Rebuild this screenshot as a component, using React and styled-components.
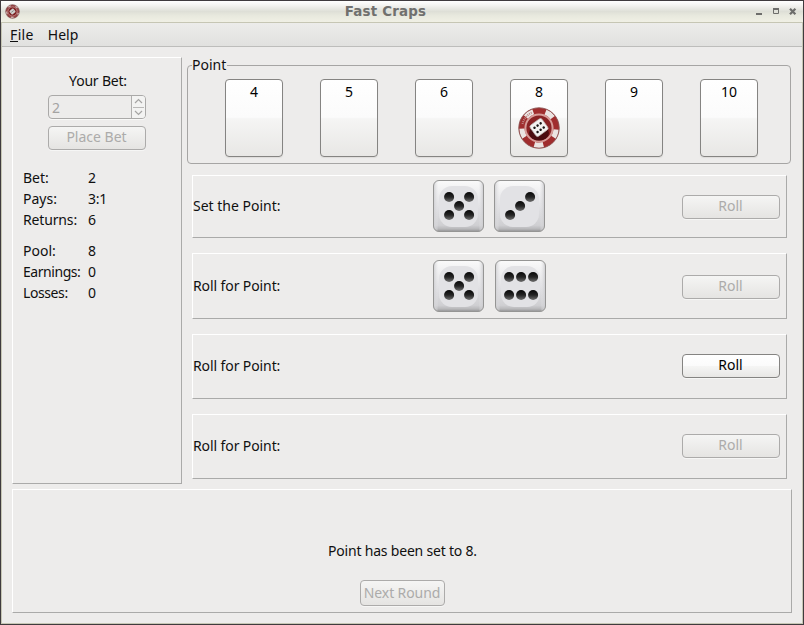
import React from "react";
import styled, { createGlobalStyle, css } from "styled-components";

const GlobalStyle = createGlobalStyle`
  * { box-sizing: border-box; }
  body { margin: 0; background: #edeceb; }
`;

const Window = styled.div`
  width: 804px;
  height: 625px;
  display: flex;
  flex-direction: column;
  border: 1px solid #3f3b3e;
  background: #edeceb;
  color: #101010;
  font: 14px/21px "Noto Sans", sans-serif;
  overflow: hidden;
`;

const Frame = styled.div`
  flex: 1;
  border: 1px solid #c6c6b4;
  display: flex;
  flex-direction: column;
`;

const TitleBar = styled.header`
  height: 21px;
  display: grid;
  grid-template-columns: 60px 1fr 60px;
  align-items: center;
  padding: 0 6px 0 4px;
  background: linear-gradient(#ffffff 0, #f4f4f1 20%, #dedfd7 50%, #e8e9de 70%, #f0f0e5 100%);
`;

const Title = styled.h1`
  margin: 0 31px 0 0;
  text-align: center;
  color: #70706e;
  font: bold 13.4px/18px "DejaVu Sans", sans-serif;
  letter-spacing: 0.2px;
`;

const WindowControls = styled.div`
  display: flex;
  justify-content: flex-end;
  gap: 9px;
  svg { display: block; }
`;

const MenuBar = styled.nav`
  height: 24px;
  display: flex;
  gap: 14px;
  padding: 1px 8px 0;
  border-bottom: 1px solid #bdbdbb;
  background: linear-gradient(#ececea, #e1e1df);
`;

const Text = styled.span`
  white-space: pre;
  letter-spacing: ${(p) => p.$spacing || 0}px;
`;

const Mnemonic = styled.span`
  display: inline-block;
  height: 18px;
  line-height: 21px;
  border-bottom: 1px solid #101010;
`;

const Content = styled.main`
  flex: 1;
  padding: 10px 10px 0;
  display: flex;
  flex-direction: column;
  gap: 5px;
`;

const Upper = styled.div`
  display: flex;
  gap: 5px;
  height: 427px;
`;

const raised = css`
  border: 1px solid;
  border-color: #ffffff #aaaaa9 #aaaaa9 #ffffff;
`;

const BetPanel = styled.section`
  ${raised}
  width: 170px;
  padding: 12px 0 0;
  display: flex;
  flex-direction: column;
  align-items: center;
`;

const PanelTitle = styled.div`
  padding-left: 2px;
  letter-spacing: -0.2px;
`;

const SpinBox = styled.div`
  width: 98px;
  height: 24px;
  margin: 4px 0 7px;
  display: flex;
  border: 1px solid #aaa9a8;
  border-radius: 4px;
  color: #a4a3a2;
  box-shadow: 0 1px 0 #f8f8f7;
`;

const SpinValue = styled.div`
  flex: 1;
  padding: 1px 0 0 3px;
`;

const SpinArrows = styled.div`
  width: 14px;
  border-left: 1px solid #b0afae;
  background: #f3f3f2;
  border-radius: 0 3px 3px 0;
  svg { display: block; }
`;

const Button = styled.button`
  width: ${(p) => p.$width || 98}px;
  height: ${(p) => p.$height || 24}px;
  flex: none;
  padding: 0 1px ${(p) => (p.$height ? 0 : 2)}px 0;
  border: 1px solid #858482;
  border-radius: 4px;
  background: linear-gradient(#ffffff 0, #fbfbfb 48%, #f5f5f4 52%, #e8e7e5 100%);
  box-shadow: 0 1px 0 #f6f6f5;
  color: #000;
  font: inherit;
  line-height: 20px;
  letter-spacing: ${(p) => p.$spacing || 0}px;
  &:disabled {
    color: #acabaa;
    border-color: #acabaa;
    background: linear-gradient(#f5f5f4, #e5e4e2);
  }
`;

const Stats = styled.dl`
  align-self: stretch;
  margin: ${(p) => p.$top}px 0 0 10px;
  display: grid;
  grid-template-columns: 65px 1fr;
  grid-auto-rows: 21px;
`;

const Term = styled.dt`
  white-space: nowrap;
  letter-spacing: ${(p) => p.$spacing || 0}px;
`;

const Value = styled.dd`
  margin: 0;
  letter-spacing: -0.2px;
`;

const Table = styled.div`
  width: 605px;
  display: flex;
  flex-direction: column;
`;

const PointGroup = styled.fieldset`
  margin: 0 1px 0 0;
  width: 604px;
  height: 107px;
  padding: 0 32px 0 37px;
  border: 1px solid #a6a5a4;
  border-radius: 4px;
  display: flex;
  justify-content: space-between;
`;

const Legend = styled.legend`
  margin-left: -33px;
  padding: 0 1px 0 0;
  height: 17px;
  line-height: 15px;
`;

const Card = styled.div`
  width: 58px;
  height: 78px;
  margin-top: 5px;
  padding-top: 1px;
  display: flex;
  flex-direction: column;
  align-items: center;
  border: 1px solid #858482;
  border-radius: 4px;
  background: linear-gradient(#ffffff 0, #fbfbfb 49%, #f5f5f4 51%, #e8e7e5 100%);
  box-shadow: 0 1px 1px #dddcda;
  color: #000;
  svg { display: block; flex: none; margin-top: 5px; }
`;

const Rows = styled.div`
  margin: 11px 0 0 5px;
  width: 595px;
  display: grid;
  grid-template-rows: 63px 66px 65px 65px;
  gap: 15px;
`;

const RollRow = styled.section`
  ${raised}
  display: grid;
  grid-template-columns: 240px 1fr 98px;
  padding: ${(p) => p.$top}px 6px 0 0;
  align-items: start;
`;

const RollLabel = styled.div`
  padding-top: 15px;
  letter-spacing: ${(p) => p.$spacing || 0}px;
`;

const DiceTray = styled.div`
  display: flex;
  gap: ${(p) => p.$gap}px;
  svg { display: block; }
`;

const RollSlot = styled.div`
  padding-top: ${(p) => p.$top}px;
  display: flex;
`;

const MessagePanel = styled.section`
  ${raised}
  width: 780px;
  height: 124px;
  padding: 50px 0 0 1px;
  display: flex;
  flex-direction: column;
  align-items: center;
  gap: 19px;
`;

const PIPS = {
  3: [[36.5, 17], [26.5, 26], [16.5, 35]],
  5: [[16.5, 17], [36.5, 17], [26.5, 26], [16.5, 35], [36.5, 35]],
  6: [[14.5, 17], [26.5, 17], [38.5, 17], [14.5, 35], [26.5, 35], [38.5, 35]],
};

function Die({ value }) {
  return (
    <svg width="51" height="52" viewBox="0 0 51 52">
      <defs>
        <linearGradient id="dieBody" x1="0" y1="0" x2="0" y2="1">
          <stop offset="0" stopColor="#fafafa" />
          <stop offset="0.5" stopColor="#e2e2e5" />
          <stop offset="0.88" stopColor="#cfcfd2" />
          <stop offset="0.95" stopColor="#b8b8ba" />
          <stop offset="1" stopColor="#929294" />
        </linearGradient>
        <linearGradient id="dieSide" x1="0" y1="0" x2="1" y2="0">
          <stop offset="0" stopColor="#cfcfd2" />
          <stop offset="0.1" stopColor="#e6e6e8" stopOpacity="0" />
          <stop offset="0.9" stopColor="#e6e6e8" stopOpacity="0" />
          <stop offset="1" stopColor="#cacacd" />
        </linearGradient>
        <linearGradient id="pip" x1="0" y1="0" x2="0" y2="1">
          <stop offset="0" stopColor="#080808" />
          <stop offset="0.5" stopColor="#242424" />
          <stop offset="1" stopColor="#707070" />
        </linearGradient>
      </defs>
      <rect x="0.5" y="0.5" width="50" height="51" rx="5.5" fill="url(#dieBody)" />
      <rect x="0.5" y="0.5" width="50" height="51" rx="5.5" fill="url(#dieSide)" stroke="#959594" />
      <rect x="6" y="6" width="39" height="41" rx="13" fill="#e2e2e5" />
      {PIPS[value].map(([x, y]) => (
        <circle key={`${x}-${y}`} cx={x - 0.4} cy={y} r="5" fill="url(#pip)" />
      ))}
    </svg>
  );
}

function Chip({ size }) {
  return (
    <svg width={size} height={size} viewBox="0 0 42 42">
      <circle cx="21" cy="21" r="20.3" fill="#a02d2e" />
      <circle cx="21" cy="21" r="17.2" fill="none" stroke="#ebe4e2" strokeWidth="5.4"
        strokeDasharray="9 12.6" strokeDashoffset="4.5" transform="rotate(18 21 21)" />
      <circle cx="21" cy="21" r="20.2" fill="none" stroke="#8a5352" strokeWidth="0.9" />
      <circle cx="21" cy="21" r="13.6" fill="#8a2224" stroke="#d79c99" strokeWidth="2" />
      <ellipse cx="21" cy="26" rx="10" ry="7.5" fill="#4a0c0f" />
      <path d="M4.5 17A17 17 0 0 1 14 5.5" fill="none" stroke="#c08a88" strokeWidth="2" strokeDasharray="1 1" />
      <g transform="translate(21 20.5) rotate(-36)">
        <rect x="-7.3" y="-6.8" width="14.6" height="13.6" rx="2.2" fill="#f3f1ef" stroke="#bdb6b3" strokeWidth="0.7" />
        {[-3.8, 0, 3.8].map((x) =>
          [-2.4, 2.8].map((y) => <circle key={`${x},${y}`} cx={x} cy={y} r="1.25" fill="#191414" />)
        )}
      </g>
    </svg>
  );
}

function ChipIcon() {
  return (
    <svg width="15" height="15" viewBox="0 0 15 15">
      <circle cx="7.5" cy="7.5" r="6.8" fill="#953f40" stroke="#7d5252" strokeWidth="0.7" />
      <circle cx="7.5" cy="7.5" r="5.9" fill="none" stroke="#c9b0ae" strokeWidth="1.3"
        strokeDasharray="2.6 4.8" strokeDashoffset="1.3" transform="rotate(18 7.5 7.5)" />
      <circle cx="7.5" cy="7.5" r="4.6" fill="#7d2224" stroke="#c79492" strokeWidth="0.8" />
      <rect x="5.1" y="5.2" width="4.8" height="4.6" rx="0.8" fill="#d0cfcd" transform="rotate(-40 7.5 7.5)" />
      <path d="M6.3 8.4l2.4-1.9" stroke="#777" strokeWidth="0.8" />
    </svg>
  );
}

const ROLLS = [
  { label: "Set the Point:", dice: [5, 3], gap: 10, top: 4, slot: 15, spacing: 0 },
  { label: "Roll for Point:", dice: [5, 6], gap: 11, top: 6, slot: 15, spacing: -0.1 },
  { label: "Roll for Point:", dice: [], gap: 0, top: 5, slot: 15, active: true, spacing: -0.1 },
  { label: "Roll for Point:", dice: [], gap: 0, top: 5, slot: 15, spacing: -0.1 },
];

export default function App() {
  return (
    <Window>
      <GlobalStyle />
      <TitleBar>
        <ChipIcon />
        <Title>Fast Craps</Title>
        <WindowControls>
          <svg width="8" height="8"><path d="M1 6h6" stroke="#6d6d6b" strokeWidth="2" /></svg>
          <svg width="8" height="8"><path d="M1.5 1.5h5v4h-5z" fill="none" stroke="#6d6d6b" /><path d="M1 1h6" stroke="#6d6d6b" strokeWidth="2" /></svg>
          <svg width="8" height="8"><path d="M1 0.8l5.400 5.400M6.400 0.800l-5.400 5.400" stroke="#6d6d6b" strokeWidth="2.2" /></svg>
        </WindowControls>
      </TitleBar>
      <Frame>
        <MenuBar>
          <Text $spacing={0.35}><Mnemonic>F</Mnemonic>ile</Text>
          <Text>Help</Text>
        </MenuBar>
        <Content>
          <Upper>
            <BetPanel>
              <PanelTitle>Your Bet:</PanelTitle>
              <SpinBox>
                <SpinValue>2</SpinValue>
                <SpinArrows>
                  <svg width="13" height="22">
                    <path d="M3 7l3.5-3.5L10 7M3 15l3.5 3.5L10 15" fill="none" stroke="#a5a4a3" strokeWidth="1.2" />
                    <path d="M1 11.5h11" stroke="#bab9b8" />
                  </svg>
                </SpinArrows>
              </SpinBox>
              <Button disabled>Place Bet</Button>
              <Stats $top={17}>
                <Term>Bet:</Term><Value>2</Value>
                <Term>Pays:</Term><Value>3:1</Value>
                <Term $spacing={-0.15}>Returns:</Term><Value>6</Value>
              </Stats>
              <Stats $top={10}>
                <Term>Pool:</Term><Value>8</Value>
                <Term $spacing={-0.45}>Earnings:</Term><Value>0</Value>
                <Term $spacing={-0.4}>Losses:</Term><Value>0</Value>
              </Stats>
            </BetPanel>
            <Table>
              <PointGroup>
                <Legend>Point</Legend>
                {[4, 5, 6, 8, 9, 10].map((n) => (
                  <Card key={n}>
                    <span>{n}</span>
                    {n === 8 && <Chip size={42} />}
                  </Card>
                ))}
              </PointGroup>
              <Rows>
                {ROLLS.map((r, i) => (
                  <RollRow key={i} $top={r.top}>
                    <RollLabel $spacing={r.spacing}>{r.label}</RollLabel>
                    <DiceTray $gap={r.gap}>
                      {r.dice.map((d, j) => <Die key={j} value={d} />)}
                    </DiceTray>
                    <RollSlot $top={r.slot - (r.top === 5 ? 1 : 0)}>
                      <Button disabled={!r.active}>Roll</Button>
                    </RollSlot>
                  </RollRow>
                ))}
              </Rows>
            </Table>
          </Upper>
          <MessagePanel>
            <Text $spacing={-0.2}>Point has been set to 8.</Text>
            <Button disabled $width={85} $height={26} $spacing={-0.1}>Next Round</Button>
          </MessagePanel>
        </Content>
      </Frame>
    </Window>
  );
}
